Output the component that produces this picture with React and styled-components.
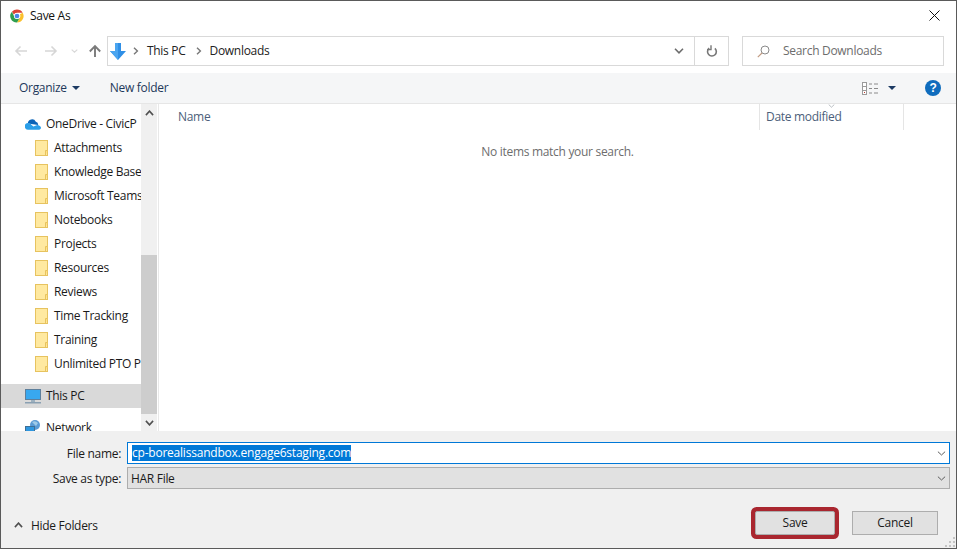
import styled, { createGlobalStyle } from "styled-components";

const folders = [
  "Attachments",
  "Knowledge Base",
  "Microsoft Teams",
  "Notebooks",
  "Projects",
  "Resources",
  "Reviews",
  "Time Tracking",
  "Training",
  "Unlimited PTO P",
];

function ChromeLogo() {
  return (
    <svg width="14" height="14" viewBox="0 0 16 16">
      <path d="M8 0.5a7.5 7.5 0 0 1 6.5 3.75H8a3.75 3.75 0 0 0-3.4 2.2L2.2 3A7.5 7.5 0 0 1 8 0.5z" fill="#db4437" />
      <path d="M14.5 4.25A7.5 7.5 0 0 1 8 15.5l3.2-5.6A3.75 3.75 0 0 0 11.3 6L14.5 4.25z" fill="#fbc02d" />
      <path d="M2.2 3L5.5 9.9A3.75 3.75 0 0 0 11.2 9.9L8 15.5A7.5 7.5 0 0 1 2.2 3z" fill="#2e9e4f" />
      <circle cx="8" cy="8" r="3.5" fill="#fff" />
      <circle cx="8" cy="8" r="2.7" fill="#4a86e8" />
    </svg>
  );
}

function CloseIcon() {
  return (
    <svg width="11" height="11" viewBox="0 0 11 11">
      <path d="M0.5 0.5L10.5 10.5M10.5 0.5L0.5 10.5" stroke="#111" strokeWidth="1" fill="none" />
    </svg>
  );
}

function Arrow({ flip, color }) {
  return (
    <svg width="14" height="12" viewBox="0 0 14 12" style={flip ? { transform: "scaleX(-1)" } : undefined}>
      <path d="M13 6H2M6.5 1.5L2 6l4.5 4.5" stroke={color} strokeWidth="1.6" fill="none" />
    </svg>
  );
}

function UpArrow() {
  return (
    <svg width="14" height="14" viewBox="0 0 14 14">
      <path d="M7 13V2.500M1.800 7.500L7 2.200l5.200 5.300" stroke="#7a7a7a" strokeWidth="1.900" fill="none" />
    </svg>
  );
}

function Chevron({ color = "#6d6d6d", up, w = 10, h = 6, sw = 1.6 }) {
  return (
    <svg width={w} height={h} viewBox="0 0 10 6" preserveAspectRatio="none">
      <path d={up ? "M1 5.200L5 1.200l4 4" : "M1 0.800l4 4 4-4"} stroke={color} strokeWidth={sw} fill="none" />
    </svg>
  );
}

function Crumb() {
  return (
    <svg width="6" height="8" viewBox="0 0 6 8">
      <path d="M1 0.800L4.400 4 1 7.200" stroke="#777" strokeWidth="1.400" fill="none" />
    </svg>
  );
}

function DownloadIcon() {
  return (
    <svg width="16" height="17" viewBox="0 0 16 17">
      <path d="M5 0h6v8h5l-8 9-8-9h5z" fill="#2f8fe6" />
      <path d="M5 0h3v17l-8-9h5z" fill="#4aa5f0" />
    </svg>
  );
}

function RefreshIcon() {
  return (
    <svg width="12" height="13" viewBox="0 0 12 13">
      <path d="M3.200 3.200A4.400 4.400 0 1 0 8.900 3.400" stroke="#777" strokeWidth="1.600" fill="none" />
      <path d="M4.400 0.400v4.400H0.400" stroke="#777" strokeWidth="1.400" fill="none" transform="translate(0.600 -0.200)" />
    </svg>
  );
}

function SearchIcon() {
  return (
    <svg width="13" height="13" viewBox="0 0 13 13">
      <circle cx="8" cy="5" r="4" stroke="#8a8a8a" fill="none" />
      <path d="M5 8L0.800 12.200" stroke="#c09a80" strokeWidth="1.100" />
    </svg>
  );
}

function ViewIcon() {
  return (
    <svg width="17" height="13" viewBox="0 0 17 13">
      <rect x="0.500" y="0.500" width="4" height="12" fill="#fff" stroke="#9a9a9a" />
      <path d="M1 4.500h3M1 8.500h3" stroke="#9a9a9a" />
      <rect x="2" y="10" width="1" height="1" fill="#c0392b" />
      <path d="M7 2h3M12 2h4M7 6.500h3M12 6.500h4M7 11h3M12 11h4" stroke="#8a8a8a" />
    </svg>
  );
}

function Caret({ color = "#1c3a63" }) {
  return (
    <svg width="8" height="4" viewBox="0 0 8 4">
      <path d="M0 0h8L4 4z" fill={color} />
    </svg>
  );
}

function FolderIcon() {
  return (
    <svg width="13" height="16" viewBox="0 0 13 16">
      <rect x="0.500" y="0.500" width="12" height="15" fill="#ffe9a0" stroke="#e7c35f" />
      <path d="M10.500 15.500v-5h2" fill="#ffdf80" stroke="#e7c35f" />
    </svg>
  );
}

function CloudIcon() {
  return (
    <svg width="16" height="11" viewBox="0 0 17 11">
      <path d="M3 4.500a4.500 4.500 0 0 1 8.500-2 3.500 3.500 0 0 1 2.500 3.500z" fill="#0a63b8" />
      <path d="M3.500 11a3.500 3.500 0 0 1-.5-7c1.500 0 3 .8 4 2l2 1.500 4-1.500c2 0 4 1.500 4 3 0 1-1 2-2 2z" fill="#2a9ee8" />
    </svg>
  );
}

function PcIcon() {
  return (
    <svg width="16" height="15" viewBox="0 0 16 15">
      <rect x="0.500" y="0.500" width="15" height="10" fill="#38a8ef" stroke="#5d7f9c" />
      <rect x="6" y="11" width="4" height="2" fill="#9cb0bf" />
      <rect x="0" y="13" width="16" height="1.500" fill="#8aa0b2" />
    </svg>
  );
}

function NetworkIcon() {
  return (
    <svg width="16" height="16" viewBox="0 0 16 16">
      <circle cx="10" cy="5" r="5" fill="#5b9bd5" />
      <path d="M7 2a5 5 0 0 1 6 1l-2 3z" fill="#9fcbe8" />
      <rect x="0.500" y="6.500" width="9" height="7" fill="#2f97e0" stroke="#3f6f95" />
    </svg>
  );
}

function Grip() {
  return (
    <svg width="10" height="10" viewBox="0 0 10 10">
      <path d="M8 0h2v2H8zM4 4h2v2H4zM8 4h2v2H8zM0 8h2v2H0zM4 8h2v2H4zM8 8h2v2H8z" fill="#c4c4c4" />
    </svg>
  );
}

export default function App() {
  return (
    <>
      <GlobalStyle />
      <Dialog>
        <TitleBar>
          <ChromeLogo />
          <Title>Save As</Title>
          <CloseButton>
            <CloseIcon />
          </CloseButton>
        </TitleBar>

        <NavBar>
          <NavButtons>
            <Arrow color="#d6d6d6" />
            <Arrow flip color="#d6d6d6" />
            <SmallDown>
              <Chevron color="#d8d8d8" w={7} h={4} />
            </SmallDown>
            <UpArrow />
          </NavButtons>
          <AddressBox>
            <DownloadIcon />
            <Crumb />
            <CrumbText>This PC</CrumbText>
            <Crumb />
            <CrumbText>Downloads</CrumbText>
            <AddressEnd>
              <Chevron />
            </AddressEnd>
            <RefreshCell>
              <RefreshIcon />
            </RefreshCell>
          </AddressBox>
          <SearchBox>
            <SearchIcon />
            <SearchText>Search Downloads</SearchText>
          </SearchBox>
        </NavBar>

        <Toolbar>
          <ToolText>Organize</ToolText>
          <Caret />
          <NewFolder>New folder</NewFolder>
          <ToolRight>
            <ViewIcon />
            <Caret />
            <HelpBadge>?</HelpBadge>
          </ToolRight>
        </Toolbar>

        <Body>
          <Sidebar>
            <Tree>
              <TopRow>
                <CloudIcon />
                <RowLabel>OneDrive - CivicP</RowLabel>
              </TopRow>
              {folders.map((name) => (
                <FolderRow key={name}>
                  <FolderIcon />
                  <RowLabel>{name}</RowLabel>
                </FolderRow>
              ))}
              <TopRow $selected>
                <PcIcon />
                <RowLabel>This PC</RowLabel>
              </TopRow>
              <TopRow $network>
                <NetworkIcon />
                <RowLabel>Network</RowLabel>
              </TopRow>
            </Tree>
            <Scrollbar>
              <ScrollBtn>
                <Chevron up color="#505050" w={9} h={6} sw={1.8} />
              </ScrollBtn>
              <ScrollTrack>
                <ScrollThumb />
              </ScrollTrack>
              <ScrollBtn>
                <Chevron color="#505050" w={9} h={6} sw={1.8} />
              </ScrollBtn>
            </Scrollbar>
          </Sidebar>

          <Content>
            <ColumnHeaders>
              <NameColumn>Name</NameColumn>
              <DateColumn>
                <SortMark>
                  <Chevron color="#9aa0a8" w={7} h={4} sw={1} />
                </SortMark>
                Date modified
              </DateColumn>
            </ColumnHeaders>
            <EmptyText>No items match your search.</EmptyText>
          </Content>
        </Body>

        <Footer>
          <FieldGrid>
            <FieldLabel>File name:</FieldLabel>
            <NameInput>
              <Selected>cp-borealissandbox.engage6staging.com</Selected>
              <ComboArrow>
                <Chevron color="#555" w={9} h={5} sw={1.1} />
              </ComboArrow>
            </NameInput>
            <FieldLabel>Save as type:</FieldLabel>
            <TypeSelect>
              HAR File
              <ComboArrow>
                <Chevron color="#555" w={9} h={5} sw={1.1} />
              </ComboArrow>
            </TypeSelect>
          </FieldGrid>

          <ActionRow>
            <HideFolders>
              <Chevron up color="#505050" w={9} h={6} sw={1.8} />
              <span>Hide Folders</span>
            </HideFolders>
            <SaveButton>Save</SaveButton>
            <CancelButton>Cancel</CancelButton>
          </ActionRow>
          <GripCorner>
            <Grip />
          </GripCorner>
        </Footer>
      </Dialog>
    </>
  );
}

const GlobalStyle = createGlobalStyle`
  html, body {
    margin: 0;
    padding: 0;
    background: #fff;
  }
  body {
    font-family: "Open Sans", "Noto Sans", sans-serif;
    font-size: 12px;
    letter-spacing: -0.3px;
    color: #1a1a1a;
  }
`;

const Dialog = styled.div`
  width: 957px;
  height: 549px;
  box-sizing: border-box;
  border: 1px solid #5a5a5a;
  display: flex;
  flex-direction: column;
  overflow: hidden;
  background: #fff;
`;

const TitleBar = styled.div`
  height: 29px;
  display: flex;
  align-items: center;
  padding: 0 16px 0 9px;
  flex-shrink: 0;
`;

const Title = styled.div`
  margin-left: 6px;
  color: #111;
`;

const CloseButton = styled.div`
  margin-left: auto;
  display: flex;
  align-items: center;
`;

const NavBar = styled.div`
  height: 30px;
  margin-top: 6px;
  display: flex;
  align-items: stretch;
  flex-shrink: 0;
`;

const NavButtons = styled.div`
  width: 106px;
  display: flex;
  align-items: center;
  padding-left: 13px;
  box-sizing: border-box;
  gap: 16px;
`;

const SmallDown = styled.span`
  display: flex;
  margin: 0 -6px 0 -3px;
`;

const AddressBox = styled.div`
  width: 622px;
  border: 1px solid #d9d9d9;
  box-sizing: border-box;
  display: flex;
  align-items: center;
  padding-left: 2px;
  gap: 7px;
`;

const CrumbText = styled.span`
  color: #222;
  margin: 0 3px 2px 1px;
`;

const AddressEnd = styled.div`
  margin-left: auto;
  width: 30px;
  display: flex;
  justify-content: center;
`;

const RefreshCell = styled.div`
  width: 33px;
  align-self: stretch;
  margin-left: -7px;
  border-left: 1px solid #d9d9d9;
  display: flex;
  align-items: center;
  justify-content: center;
`;

const SearchBox = styled.div`
  width: 202px;
  margin-left: 13px;
  border: 1px solid #d9d9d9;
  box-sizing: border-box;
  display: flex;
  align-items: center;
  padding-left: 14px;
  gap: 13px;
  color: #6d6d6d;
`;

const SearchText = styled.span`
  margin-bottom: 2px;
`;

const Toolbar = styled.div`
  height: 30px;
  margin-top: 7px;
  background: #f5f6f7;
  border-bottom: 1px solid #e6e6e6;
  display: flex;
  align-items: center;
  padding-left: 18px;
  flex-shrink: 0;
  box-sizing: content-box;
`;

const ToolText = styled.span`
  color: #1e395b;
  margin: 0 5px 2px 0;
`;

const NewFolder = styled(ToolText)`
  margin: 0 0 2px 30px;
`;

const ToolRight = styled.div`
  margin-left: auto;
  display: flex;
  align-items: center;
  gap: 9px;
  padding-right: 15px;
`;

const HelpBadge = styled.span`
  width: 16px;
  height: 16px;
  margin-left: 20px;
  border-radius: 50%;
  background: #0f6cbd;
  color: #fff;
  font-family: "Liberation Sans", sans-serif;
  font-weight: 700;
  font-size: 12px;
  display: flex;
  align-items: center;
  justify-content: center;
`;

const Body = styled.div`
  flex: 1;
  min-height: 0;
  display: flex;
  overflow: hidden;
`;

const Sidebar = styled.div`
  width: 157px;
  flex-shrink: 0;
  display: flex;
  border-right: 1px solid #e8e8e8;
  box-sizing: content-box;
`;

const Tree = styled.div`
  width: 140px;
  padding-top: 8px;
  overflow: hidden;
  flex-shrink: 0;

  svg {
    flex-shrink: 0;
  }
`;

const TopRow = styled.div`
  height: 24px;
  display: flex;
  align-items: center;
  padding-left: 24px;
  gap: 5px;
  background: ${(p) => (p.$selected ? "#d9d9d9" : "transparent")};
  margin-top: ${(p) => (p.$selected || p.$network ? "8px" : "0")};
`;

const FolderRow = styled.div`
  height: 24px;
  display: flex;
  align-items: center;
  padding-left: 34px;
  gap: 6px;
`;

const RowLabel = styled.span`
  white-space: nowrap;
  color: #1a1a1a;
  margin-bottom: 2px;
`;

const Scrollbar = styled.div`
  width: 16px;
  background: #f0f0f0;
  display: flex;
  flex-direction: column;
  flex-shrink: 0;
`;

const ScrollBtn = styled.div`
  height: 17px;
  display: flex;
  align-items: center;
  justify-content: center;
  flex-shrink: 0;
`;

const ScrollTrack = styled.div`
  flex: 1;
  padding-top: 134px;
  box-sizing: border-box;
`;

const ScrollThumb = styled.div`
  height: 159px;
  background: #cdcdcd;
`;

const Content = styled.div`
  flex: 1;
  min-width: 0;
`;

const ColumnHeaders = styled.div`
  height: 26px;
  display: flex;
`;

const NameColumn = styled.div`
  width: 600px;
  box-sizing: border-box;
  padding: 4px 0 0 19px;
  color: #4c607a;
`;

const DateColumn = styled.div`
  position: relative;
  width: 145px;
  box-sizing: border-box;
  padding: 4px 0 0 6px;
  color: #4c607a;
  border-left: 1px solid #e5e5e5;
  border-right: 1px solid #e5e5e5;
`;

const SortMark = styled.span`
  position: absolute;
  left: 68px;
  top: 0;
  display: flex;
`;

const EmptyText = styled.div`
  margin-top: 13px;
  text-align: center;
  color: #6d6d6d;
`;

const Footer = styled.div`
  position: relative;
  height: 117px;
  flex-shrink: 0;
  background: #f0f0f0;
  box-sizing: border-box;
  padding: 11px 6px 0 0;
  display: flex;
  flex-direction: column;
`;

const FieldGrid = styled.div`
  display: grid;
  grid-template-columns: 120px 1fr;
  column-gap: 6px;
  row-gap: 3px;
  align-items: center;
`;

const FieldLabel = styled.div`
  text-align: right;
  color: #1a1a1a;
`;

const NameInput = styled.div`
  height: 22px;
  box-sizing: border-box;
  border: 1px solid #0078d7;
  background: #fff;
  display: flex;
  align-items: center;
  padding-left: 4px;
  position: relative;
`;

const Selected = styled.span`
  background: #0078d7;
  color: #fff;
  line-height: 16px;
  letter-spacing: -0.22px;
`;

const TypeSelect = styled.div`
  height: 22px;
  box-sizing: border-box;
  border: 1px solid #adadad;
  background: #e1e1e1;
  display: flex;
  align-items: center;
  padding-left: 3px;
  position: relative;
`;

const ComboArrow = styled.span`
  margin-left: auto;
  width: 16px;
  display: flex;
  justify-content: center;
`;

const ActionRow = styled.div`
  margin-top: 22px;
  display: flex;
  align-items: center;
  padding: 0 12px 0 13px;
`;

const HideFolders = styled.div`
  display: flex;
  align-items: center;
  gap: 8px;
  margin: 4px auto 0 0;
`;

const SaveButton = styled.div`
  width: 80px;
  height: 24px;
  box-sizing: border-box;
  border: 1px solid #adadad;
  background: #e1e1e1;
  display: flex;
  align-items: center;
  justify-content: center;
  padding-bottom: 2px;
  margin-right: 17px;
  box-shadow: 0 0 0 4px #a9262f;
  border-radius: 2px;
`;

const CancelButton = styled(SaveButton)`
  width: 86px;
  margin-right: 0;
  box-shadow: none;
  border-radius: 0;
`;

const GripCorner = styled.div`
  position: absolute;
  right: 1px;
  bottom: 1px;
  display: flex;
`;
